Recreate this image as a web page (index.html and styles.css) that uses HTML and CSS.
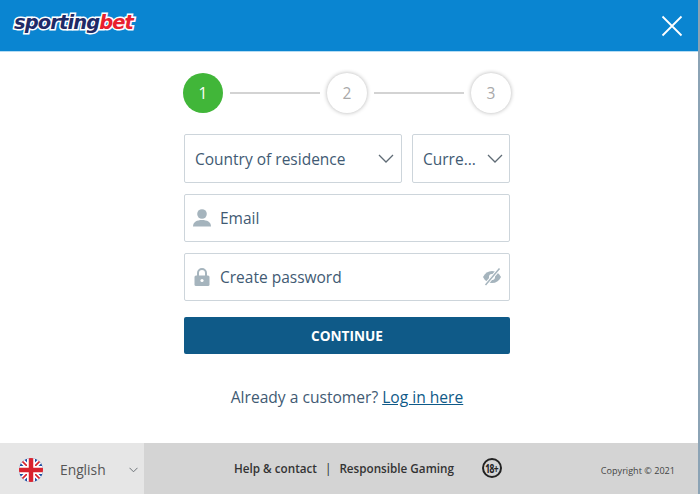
FILE: index.html
```html
<!DOCTYPE html>
<html lang="en">
<head>
    <meta charset="UTF-8">
    <title>Sportingbet registration</title>
    <link rel="stylesheet" href="styles.css">
</head>
<body>
    <div class="dialog">
        <header class="top-bar">
            <div class="logo"><span class="logo-a">sporting</span><span class="logo-b">bet</span></div>
            <svg class="close" width="22" height="22" viewBox="0 0 22 22"><path d="M1.500 1.500l19 19M20.500 1.500l-19 19" stroke="#fff" stroke-width="1.800" fill="none"/></svg>
        </header>

        <main class="content">
            <div class="steps">
                <div class="step active">1</div>
                <div class="step-line"></div>
                <div class="step">2</div>
                <div class="step-line"></div>
                <div class="step">3</div>
            </div>

            <div class="row">
                <div class="field select country">
                    <span>Country of residence</span>
                    <svg width="16" height="9" viewBox="0 0 16 9"><path d="M1 1l7 7 7-7" stroke="#5f6b75" stroke-width="1.300" fill="none"/></svg>
                </div>
                <div class="field select currency">
                    <span>Curre...</span>
                    <svg width="16" height="9" viewBox="0 0 16 9"><path d="M1 1l7 7 7-7" stroke="#5f6b75" stroke-width="1.300" fill="none"/></svg>
                </div>
            </div>

            <div class="field input">
                <svg class="icon" width="20" height="20" viewBox="0 0 20 20"><circle cx="10" cy="6" r="4.800" fill="#a5b4bd"/><path d="M1 18.500c0-4.500 4-6.500 9-6.500s9 2 9 6.500z" fill="#a5b4bd"/></svg>
                <span>Email</span>
            </div>

            <div class="field input">
                <svg class="icon" width="20" height="20" viewBox="0 0 20 20"><path d="M6 9V6a4 4 0 0 1 8 0v3" stroke="#a5b4bd" stroke-width="2" fill="none"/><rect x="2.500" y="8.500" width="15" height="10.500" rx="1.500" fill="#a5b4bd"/><circle cx="10" cy="13.500" r="1.600" fill="#fff"/></svg>
                <span>Create password</span>
                <svg class="eye" width="20" height="18" viewBox="0 0 20 18"><path d="M1 9c2-4 5-6 9-6s7 2 9 6c-2 4-5 6-9 6s-7-2-9-6z" fill="#a5b4bd"/><circle cx="10" cy="9" r="3" fill="#fff"/><circle cx="10" cy="9" r="1.500" fill="#a5b4bd"/><path d="M17.500 0.500L3.500 17" stroke="#fff" stroke-width="3.500"/><path d="M17.500 0.500L3.500 17" stroke="#a5b4bd" stroke-width="1.500"/></svg>
            </div>

            <button class="continue">CONTINUE</button>

            <p class="login">Already a customer? <a href="#">Log in here</a></p>
        </main>

        <footer class="footer">
            <div class="lang">
                <svg class="flag" width="24" height="24" viewBox="0 0 24 24">
                    <clipPath id="round"><circle cx="12" cy="12" r="12"/></clipPath>
                    <g clip-path="url(#round)">
                        <rect width="24" height="24" fill="#1f4fa3"/>
                        <path d="M0 0l24 24M24 0L0 24" stroke="#fff" stroke-width="5"/>
                        <path d="M0 0l24 24M24 0L0 24" stroke="#d8232f" stroke-width="1.600"/>
                        <path d="M12 0v24M0 12h24" stroke="#fff" stroke-width="8"/>
                        <path d="M12 0v24M0 12h24" stroke="#d8232f" stroke-width="4.500"/>
                    </g>
                </svg>
                <span class="lang-name">English</span>
                <svg class="lang-arrow" width="9" height="6" viewBox="0 0 9 6"><path d="M.5.800l4 4 4-4" stroke="#6d7378" stroke-width="1" fill="none"/></svg>
            </div>
            <div class="footer-main">
                <div class="links">
                    <a href="#">Help &amp; contact</a>
                    <span class="sep">|</span>
                    <a href="#">Responsible Gaming</a>
                </div>
                <div class="age"><span>18+</span></div>
                <div class="copy">Copyright © 2021</div>
            </div>
        </footer>
    </div>
</body>
</html>
```

FILE: styles.css
```css
* {
    box-sizing: border-box;
}
html, body {
    margin: 0;
    height: 100%;
}
body {
    font-family: "Open Sans", sans-serif;
    background: #fff;
    color: #415a73;
    overflow: hidden;
}
.dialog {
    display: flex;
    flex-direction: column;
    height: 494px;
    border-right: 2px solid #8ba3b5;
}
.top-bar {
    height: 52px;
    flex: none;
    background: #0a85d1;
    border-bottom: 1px solid #b5dcf3;
    display: flex;
    align-items: center;
    justify-content: space-between;
    padding: 0 15px 5px 14px;
}
.logo {
    font-family: "DejaVu Sans", sans-serif;
    font-size: 19.500px;
    font-weight: 700;
    font-style: italic;
    letter-spacing: -.9px;
    -webkit-text-stroke: 3px #fff;
    paint-order: stroke fill;
    line-height: 22px;
}
.logo-a {
    color: #1f2a66;
}
.logo-b {
    color: #e8202e;
}
.close {
    margin-top: 5px;
}
.content {
    flex: 1;
    width: 326px;
    margin-left: 184px;
}
.steps {
    display: flex;
    align-items: center;
    justify-content: space-between;
    margin: 21px -1px 0;
    height: 40px;
}
.step {
    width: 40px;
    height: 40px;
    border-radius: 50%;
    background: #fff;
    box-shadow: 0 0 4px rgba(0,0,0,.3);
    color: #a9a9a9;
    font-size: 15.500px;
    display: flex;
    align-items: center;
    justify-content: center;
}
.step.active {
    background: #41b639;
    box-shadow: none;
    color: #fff;
}
.step-line {
    width: 90px;
    height: 2px;
    background: #d3d3d3;
}
.row {
    display: flex;
    gap: 10px;
    margin-top: 21px;
}
.field {
    display: flex;
    align-items: center;
    background: #fff;
    border: 1px solid #cdd5db;
    border-radius: 2px;
    font-size: 15.500px;
}
.select {
    height: 49px;
    justify-content: space-between;
    padding: 0 6px 0 10px;
}
.country {
    width: 218px;
    padding-right: 7px;
}
.currency {
    width: 98px;
}
.input {
    height: 48px;
    margin-top: 11px;
    padding: 0 7px;
}
.icon {
    margin-right: 8px;
    flex: none;
}
.eye {
    margin-left: auto;
}
.continue {
    display: block;
    width: 100%;
    height: 37px;
    margin-top: 16px;
    border: 0;
    border-radius: 2px;
    background: #0f5a88;
    color: #fff;
    font-family: inherit;
    font-size: 13.600px;
    font-weight: 700;
}
.login {
    margin: 32px 0 0;
    text-align: center;
    font-size: 15.600px;
    line-height: 22px;
}
.login a {
    color: #0f5a88;
}
.footer {
    flex: none;
    height: 51px;
    display: flex;
    background: #d4d4d4;
}
.lang {
    width: 144px;
    background: #e6e6e6;
    display: flex;
    align-items: center;
    padding: 2px 0 0 19px;
    color: #555;
}
.lang-name {
    font-size: 13.800px;
    margin-left: 17px;
}
.lang-arrow {
    margin-left: 23px;
}
.footer-main {
    flex: 1;
    display: flex;
    align-items: center;
    padding: 0 23px 0 90px;
    color: #222;
}
.links {
    font-size: 11.700px;
    font-weight: 600;
    display: flex;
    gap: 8px;
    margin-bottom: 2px;
}
.links a {
    color: #333;
    text-decoration: none;
}
.sep {
    font-weight: 400;
    color: #222;
}
.age {
    width: 20px;
    height: 20px;
    margin-left: 28px;
    margin-bottom: 2px;
    border: 2px solid #222;
    border-radius: 50%;
    font-size: 10px;
    font-weight: 700;
    letter-spacing: -.6px;
    display: flex;
    align-items: center;
    justify-content: center;
}
.age span {
    transform: scale(.85, 1.25);
}
.copy {
    margin-left: auto;
    margin-top: 3px;
    font-size: 9.100px;
    color: #444;
}
```
